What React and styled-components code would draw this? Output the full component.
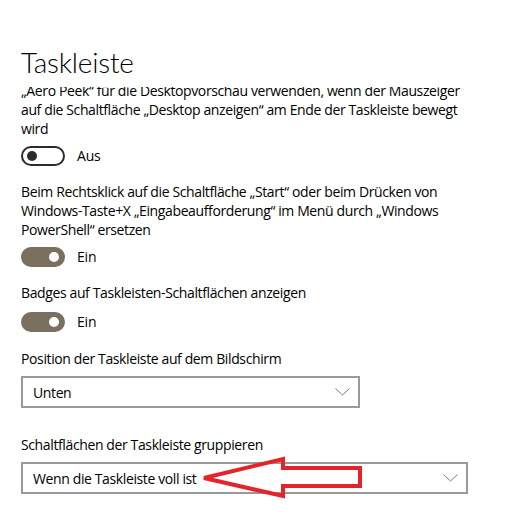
import React from 'react';
import styled, { createGlobalStyle } from 'styled-components';

const GlobalStyle = createGlobalStyle`
  html, body {
    margin: 0;
    padding: 0;
    background: #ffffff;
  }
  body {
    font-family: "Open Sans", "Noto Sans", sans-serif;
    color: #000000;
  }
`;

const Page = styled.div`
  width: 532px;
  height: 521px;
  overflow: hidden;
  background: #ffffff;
`;

const Header = styled.div`
  height: 87px;
  padding-left: 21px;
  box-sizing: border-box;
  padding-top: 42px;
`;

const Title = styled.h1`
  margin: 0;
  font-family: "Lato", "Open Sans", sans-serif;
  font-size: 28px;
  font-weight: 300;
  line-height: 40px;
  letter-spacing: -0.2px;
`;

const ScrollArea = styled.div`
  height: 434px;
  overflow: hidden;
  padding-left: 21px;
`;

const Content = styled.div`
  margin-top: -6px; // scrolled a little
`;

const Section = styled.div`
  margin-bottom: ${p => p.$gap || 16}px;
`;

const Description = styled.div`
  font-size: 14px;
  line-height: 19px;
  width: 490px;
  letter-spacing: -0.38px;
`;

const ToggleRow = styled.div`
  display: flex;
  align-items: center;
  gap: 12px;
  margin-top: ${p => p.$top || 8}px;
  height: 20px;
`;

const Track = styled.div`
  width: 44px;
  height: 20px;
  box-sizing: border-box;
  border-radius: 10px;
  display: flex;
  align-items: center;
  padding: 0 5px;
  justify-content: ${p => (p.$on ? 'flex-end' : 'flex-start')};
  background: ${p => (p.$on ? '#7a705f' : '#ffffff')};
  border: 2px solid ${p => (p.$on ? '#7a705f' : '#2b2b2b')};
`;

const Knob = styled.div`
  width: 10px;
  height: 10px;
  border-radius: 50%;
  background: ${p => (p.$on ? '#ffffff' : '#2b2b2b')};
  margin-left: ${p => (p.$on ? 0 : '-1px')};
  margin-right: ${p => (p.$on ? '-1px' : 0)};
`;

const ToggleLabel = styled.span`
  font-size: 14px;
  line-height: 20px;
  letter-spacing: -0.2px;
`;

const DropWrap = styled.div`
  position: relative;
  width: ${p => p.$width}px;
  margin-top: 8px;
`;

const Dropdown = styled.div`
  height: 32px;
  box-sizing: border-box;
  border: 2px solid #999999;
  display: flex;
  align-items: center;
  justify-content: space-between;
  padding: 0 8px 0 10px;
  font-size: 14px;
  letter-spacing: -0.38px;
`;

const Chevron = styled.svg`
  width: 15px;
  height: 8px;
  display: block;
`;

const Arrow = styled.svg`
  position: absolute;
  left: 0;
  top: -10px;
  overflow: visible;
  pointer-events: none;
`;

const Toggle = ({ on, top }) => (
  <ToggleRow $top={top}>
    <Track $on={on}>
      <Knob $on={on} />
    </Track>
    <ToggleLabel>{on ? 'Ein' : 'Aus'}</ToggleLabel>
  </ToggleRow>
);

const Select = ({ value, width, children }) => (
  <DropWrap $width={width}>
    <Dropdown>
      <span>{value}</span>
      <Chevron viewBox="0 0 15 8">
        <polyline points="0.5,0.5 7.5,7 14.5,0.5" fill="none" stroke="#7a7a7a" strokeWidth="1" />
      </Chevron>
    </Dropdown>
    {children}
  </DropWrap>
);

export default function App() {
  return (
    <Page>
      <GlobalStyle />
      <Header>
        <Title>Taskleiste</Title>
      </Header>
      <ScrollArea>
        <Content>
          <Section>
            <Description>
              „Aero Peek“ für die Desktopvorschau verwenden, wenn der Mauszeiger
              <br />
              auf die Schaltfläche „Desktop anzeigen“ am Ende der Taskleiste bewegt
              <br />
              wird
            </Description>
            <Toggle on={false} />
          </Section>
          <Section>
            <Description>
              Beim Rechtsklick auf die Schaltfläche „Start“ oder beim Drücken von
              <br />
              Windows-Taste+X „Eingabeaufforderung“ im Menü durch „Windows
              <br />
              PowerShell“ ersetzen
            </Description>
            <Toggle on />
          </Section>
          <Section $gap={17}>
            <Description>Badges auf Taskleisten-Schaltflächen anzeigen</Description>
            <Toggle on top={10} />
          </Section>
          <Section $gap={27}>
            <Description>Position der Taskleiste auf dem Bildschirm</Description>
            <Select value="Unten" width={339} />
          </Section>
          <Section>
            <Description>Schaltflächen der Taskleiste gruppieren</Description>
            <Select value="Wenn die Taskleiste voll ist" width={447}>
              <Arrow width="460" height="52" viewBox="0 0 460 52">
                <polygon
                  points="183,26 262,7 262,16 339,16 339,34 262,34 262,44"
                  fill="none"
                  stroke="#e5232a"
                  strokeWidth="4"
                  strokeLinejoin="miter"
                />
              </Arrow>
            </Select>
          </Section>
        </Content>
      </ScrollArea>
    </Page>
  );
}
